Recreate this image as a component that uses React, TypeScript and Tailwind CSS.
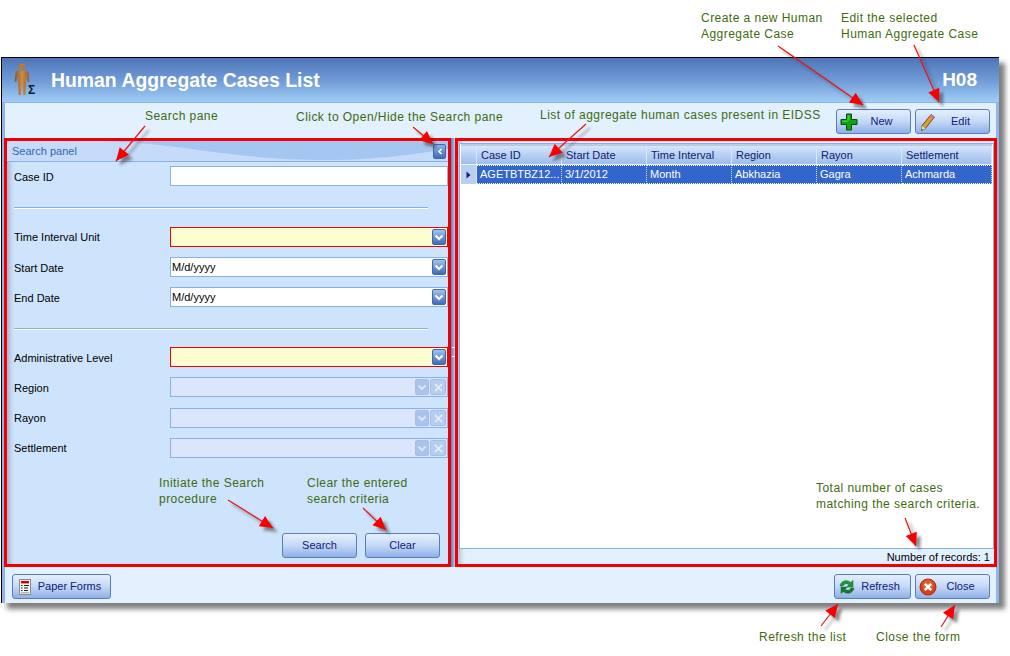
import type { ReactNode } from "react";

const notes = [
  { text: "Search pane", className: "left-[145px] top-[108px]" },
  { text: "Click to Open/Hide the Search pane", className: "left-[296px] top-[109px]" },
  { text: "List of aggregate human cases present in EIDSS", className: "left-[540px] top-[107px]" },
  { text: "Create a new Human\nAggregate Case", className: "left-[701px] top-[10px]" },
  { text: "Edit the selected\nHuman Aggregate Case", className: "left-[841px] top-[10px]" },
  { text: "Initiate the Search\nprocedure", className: "left-[159px] top-[475px]" },
  { text: "Clear the entered\nsearch criteria", className: "left-[307px] top-[475px]" },
  { text: "Total number of cases\nmatching the search criteria.", className: "left-[816px] top-[480px]" },
  { text: "Refresh the list", className: "left-[759px] top-[629px]" },
  { text: "Close the form", className: "left-[876px] top-[629px]" },
];

const arrows = [
  [145, 126, 116, 161],
  [413, 127, 433, 144],
  [586, 124, 549, 157],
  [778, 46, 863, 105],
  [914, 45, 939, 102],
  [228, 500, 273, 528],
  [363, 508, 386, 530],
  [905, 518, 916, 546],
  [821, 626, 838, 604],
  [941, 627, 955, 605],
];

const columns = ["Case ID", "Start Date", "Time Interval", "Region", "Rayon", "Settlement"];
const row = ["AGETBTBZ12...", "3/1/2012", "Month", "Abkhazia", "Gagra", "Achmarda"];

function arrowHead(x1: number, y1: number, x2: number, y2: number) {
  const len = Math.hypot(x2 - x1, y2 - y1);
  const ux = (x2 - x1) / len;
  const uy = (y2 - y1) / len;
  const bx = x2 - ux * 13;
  const by = y2 - uy * 13;
  return `${x2},${y2} ${bx - uy * 6},${by + ux * 6} ${bx + uy * 6},${by - ux * 6}`;
}

function ArrowLayer() {
  return (
    <svg className="absolute left-0 top-0 pointer-events-none" width="1010" height="656">
      <defs>
        <filter id="arrowBlur" x="-50%" y="-50%" width="200%" height="200%">
          <feGaussianBlur stdDeviation="1.6" />
        </filter>
      </defs>
      {arrows.map(([x1, y1, x2, y2], i) => (
        <g key={i}>
          <g transform="translate(4 4)" filter="url(#arrowBlur)" opacity="0.55">
            <line x1={x1} y1={y1} x2={x2} y2={y2} stroke="#333" strokeWidth="1.2" />
            <polygon points={arrowHead(x1, y1, x2, y2)} fill="#333" />
          </g>
          <line x1={x1} y1={y1} x2={x2} y2={y2} stroke="#f01010" strokeWidth="1.2" />
          <polygon points={arrowHead(x1, y1, x2, y2)} fill="#f80000" />
        </g>
      ))}
    </svg>
  );
}

function HumanIcon() {
  return (
    <div className="relative ml-[12px] mr-[13px] h-[34px] w-[24px] shrink-0">
      <svg width="18" height="33" viewBox="0 0 18 33" className="absolute left-0 top-0">
        <defs>
          <linearGradient id="body" x1="0" x2="1" y1="0" y2="0">
            <stop offset="0" stopColor="#7d5a36" />
            <stop offset="0.5" stopColor="#d08a3e" />
            <stop offset="1" stopColor="#8a6238" />
          </linearGradient>
        </defs>
        <circle cx="8" cy="3.5" r="3.2" fill="#b9773a" />
        <path
          d="M4 7.5h8c1.5 0 2.4 1 2.6 2.4l.9 8.6-1.8.4-1.2-6.5-.4 7.5-.7 12h-2.2l-.8-10.5h-.6l-.8 10.5H4.7l-.7-12-.4-7.5-1.2 6.5-1.8-.4.9-8.6C1.7 8.5 2.6 7.5 4 7.5z"
          fill="url(#body)"
        />
      </svg>
      <span className="absolute left-[14px] top-[20px] text-[12px] font-bold leading-[14px] text-[#10202c]">Σ</span>
    </div>
  );
}

function PlusIcon() {
  return (
    <svg width="18" height="18" viewBox="0 0 18 18">
      <path d="M6.5 1h5v5.5H17v5h-5.5V17h-5v-5.5H1v-5h5.5z" fill="#10a010" stroke="#064d06" strokeWidth="1" />
      <path d="M7.5 2.5h2v5h-2zM2.5 7.5h5v1.5h-5z" fill="#3fd03f" />
    </svg>
  );
}

function PencilIcon() {
  return (
    <svg width="18" height="18" viewBox="0 0 18 18">
      <path d="M12 1.5l3.5 2.6L6.2 15.6l-3.7 1.9.2-4.4z" fill="#e09a34" stroke="#4d4230" strokeWidth="0.9" />
      <path d="M12 1.5l3.5 2.6-1.5 1.9-3.5-2.7z" fill="#d87a70" />
      <path d="M2.7 13.1l3.5 2.5-3.7 1.9z" fill="#efe0c4" />
      <path d="M2.5 17.5l1.4-.7-1.3-1z" fill="#222" />
    </svg>
  );
}

function RefreshIcon() {
  return (
    <svg width="18" height="16" viewBox="0 0 18 16">
      <path d="M2 7c.6-3.4 3.4-5.6 6.8-5.2 1.6.1 2.8.8 3.8 1.8L15 1.5V8H8.8l2-2c-.6-.8-1.4-1.2-2.4-1.3C6.8 4.6 5.6 5.6 5 7z" fill="#1f9a3a" stroke="#0f6424" strokeWidth="0.5" />
      <path d="M16 9c-.6 3.4-3.4 5.6-6.8 5.2-1.6-.1-2.8-.8-3.8-1.8L3 14.5V8h6.2l-2 2c.6.8 1.4 1.2 2.4 1.3 1.6.1 2.8-.9 3.4-2.3z" fill="#127a2c" stroke="#0f6424" strokeWidth="0.5" />
    </svg>
  );
}

function CloseIcon() {
  return (
    <svg width="18" height="18" viewBox="0 0 18 18">
      <circle cx="9" cy="9" r="8" fill="#d8401c" stroke="#a32c10" />
      <circle cx="9" cy="7" r="5.5" fill="#ea6a3a" opacity="0.6" />
      <path d="M5.8 5.8l6.4 6.4M12.2 5.8l-6.4 6.4" stroke="#fff" strokeWidth="2.6" />
    </svg>
  );
}

function FormsIcon() {
  return (
    <svg width="12" height="16" viewBox="0 0 12 16">
      <rect x="0.5" y="0.5" width="11" height="15" fill="#f4f4f0" stroke="#8a8a8a" />
      <rect x="2" y="2" width="8" height="2.4" fill="#d00000" />
      <path d="M2 6.5h1.5M5 6.5h5M2 9h1.5M5 9h4M2 11.5h1.5M5 11.5h4" stroke="#222" strokeWidth="1" />
      <path d="M2 13.8h8" stroke="#999" strokeWidth="1" />
    </svg>
  );
}

function ToolButton({ label, width, icon }: { label: string; width: string; icon?: ReactNode }) {
  return (
    <button
      className={`${width} relative h-[25px] shrink-0 flex items-center justify-center rounded-[3px] border border-[#5a7cc0] bg-gradient-to-b from-[#e6f0fd] via-[#c4d8f6] to-[#8fb0e6] text-[11px] text-[#10207c]`}
    >
      {icon && <span className="absolute left-[3px] top-[3px] flex h-[18px] w-[18px] items-center justify-center">{icon}</span>}
      <span className={icon ? "pl-[16px]" : ""}>{label}</span>
    </button>
  );
}

function DropButton({ muted }: { muted?: boolean }) {
  return (
    <span
      className={`flex h-[16px] w-[14px] items-center justify-center rounded-[2px] border ${
        muted ? "border-[#a5bfe8] bg-[#a9c3ec]" : "border-[#3f67ad] bg-gradient-to-b from-[#a3c2ee] to-[#3f6cb8]"
      }`}
    >
      <svg width="10" height="7" viewBox="0 0 10 7">
        <path d="M1.5 1.5L5 5l3.5-3.5" fill="none" stroke={muted ? "#dbe6fb" : "#fff"} strokeWidth="2" />
      </svg>
    </span>
  );
}

function ClearButton() {
  return (
    <span className="flex h-[16px] w-[16px] items-center justify-center rounded-[2px] border border-[#a5bfe8] bg-[#b7cdf0]">
      <svg width="9" height="9" viewBox="0 0 9 9">
        <path d="M1 1l7 7M8 1L1 8" stroke="#eaf1fd" strokeWidth="1.6" />
      </svg>
    </span>
  );
}

function Field({
  label,
  className,
  kind,
  low,
}: {
  label: string;
  className: string;
  kind: "text" | "required" | "date" | "disabled";
  low?: boolean;
}) {
  const box =
    kind === "required"
      ? "border-[#f00000] bg-[#fdfdd0]"
      : kind === "disabled"
        ? "border-[#8ab0ea] bg-[#dbe6fd]"
        : "border-[#8ab0ea] bg-white";
  return (
    <div className={`flex h-[20px] items-center pl-[7px] ${className}`}>
      <span className={`w-[156px] shrink-0 text-[11px] text-black ${low ? "pt-[2px]" : ""}`}>{label}</span>
      <div className={`flex h-[20px] w-[278px] items-center justify-between border px-[1px] text-[11px] text-black ${box}`}>
        <span>{kind === "date" ? "M/d/yyyy" : ""}</span>
        {(kind === "required" || kind === "date") && <DropButton />}
        {kind === "disabled" && (
          <span className="flex gap-[1px]">
            <DropButton muted />
            <ClearButton />
          </span>
        )}
      </div>
    </div>
  );
}

function Divider({ className }: { className: string }) {
  return <div className={`ml-[7px] h-[2px] w-[414px] border-t border-[#8ab0e4] bg-white ${className}`} />;
}

function SearchPanel() {
  return (
    <section className="flex h-full w-[447px] shrink-0 flex-col border-[3px] border-[#f00000] bg-[#cde4fc] shadow-[inset_5px_0_4px_-2px_rgba(60,70,90,0.28)]">
      <div className="relative h-[21px] shrink-0 overflow-hidden border-b border-[#8ab0e4] bg-[#c6dafa]">
        <svg className="absolute left-0 top-0" width="441" height="20" viewBox="0 0 441 20">
          <path d="M90 0c90 2 130 19 230 19 50 0 90-6 121-11V0z" fill="#a6c6f2" />
        </svg>
        <span className="absolute left-[5px] top-[3px] text-[11px] leading-[14px] text-[#3366b0]">Search panel</span>
        <span className="absolute right-[2px] top-[3px] flex h-[15px] w-[13px] items-center justify-center rounded-[2px] border border-[#3f67ad] bg-gradient-to-b from-[#8fb2e8] to-[#3f6cb8]">
          <svg width="6" height="7" viewBox="0 0 6 7">
            <path d="M4.5 1L2 3.5 4.5 6" fill="none" stroke="#fff" strokeWidth="1.6" />
          </svg>
        </span>
      </div>
      <Field label="Case ID" kind="text" low className="mt-[4px]" />
      <Divider className="mt-[21px]" />
      <Field label="Time Interval Unit" kind="required" className="mt-[18px]" />
      <Field label="Start Date" kind="date" low className="mt-[10px]" />
      <Field label="End Date" kind="date" low className="mt-[10px]" />
      <Divider className="mt-[21px]" />
      <Field label="Administrative Level" kind="required" low className="mt-[17px]" />
      <Field label="Region" kind="disabled" low className="mt-[10px]" />
      <Field label="Rayon" kind="disabled" className="mt-[11px]" />
      <Field label="Settlement" kind="disabled" className="mt-[10px]" />
      <div className="mt-auto flex justify-end gap-[8px] pb-[6px] pr-[8px]">
        <ToolButton label="Search" width="w-[75px]" />
        <ToolButton label="Clear" width="w-[75px]" />
      </div>
    </section>
  );
}

function CasesGrid() {
  return (
    <section className="flex h-full min-w-0 flex-1 flex-col border-[3px] border-[#f00000] bg-[#e3f0fe] pl-[1px] pt-[2px] shadow-[inset_5px_0_4px_-2px_rgba(60,70,90,0.28)]">
      <div className="flex min-h-0 flex-1 flex-col border border-[#8ab0e4] bg-white px-[1px]">
        <div className="h-[2px] shrink-0 bg-[#bccbdc]" />
        <div className="grid h-[19px] shrink-0 grid-cols-[16px_85px_85px_85px_85px_85px_1fr] border-b border-[#f0f6ff] bg-gradient-to-b from-[#d6e6fb] via-[#b7d0f3] to-[#9dbdec] text-[11px] leading-[18px] text-[#12206f]">
          <div className="border-r border-[#d9e6f8]" />
          {columns.map((c) => (
            <div key={c} className="truncate border-r border-[#d9e6f8] pl-[4px]">
              {c}
            </div>
          ))}
        </div>
        <div className="grid h-[19px] shrink-0 grid-cols-[16px_85px_85px_85px_85px_85px_1fr] text-[11px] leading-[17px] text-white">
          <div className="flex items-center justify-center border-r border-[#d9e6f8] bg-[#b9d0f2]">
            <svg width="5" height="8" viewBox="0 0 5 8">
              <path d="M0.5 0.5l4 3.5-4 3.5z" fill="#12206f" />
            </svg>
          </div>
          {row.map((c) => (
            <div key={c} className="truncate border-y border-r border-dotted border-y-white border-r-[#d9e6f8] bg-[#3366cc] pl-[3px]">
              {c}
            </div>
          ))}
        </div>
        <div className="flex-1" />
      </div>
      <div className="h-[15px] shrink-0 pr-[4px] text-right text-[11px] leading-[16px] text-black">Number of records: 1</div>
    </section>
  );
}

export default function App() {
  return (
    <div className="relative h-[656px] w-[1010px] overflow-hidden bg-white [font-family:'Liberation_Sans',sans-serif]">
      <div className="h-[57px]" />
      <div className="ml-[1px] flex h-[546px] w-[998px] flex-col border-l border-t border-l-black border-t-black bg-[#e3f0fe] shadow-[6px_6px_5px_rgba(40,40,40,0.6)]">
        <header className="flex h-[45px] shrink-0 items-center border-b border-[#8ab4e8] bg-gradient-to-b from-[#4f76b8] via-[#6f9ad6] to-[#a0cdf6]">
          <HumanIcon />
          <h1 className="text-[19.4px] font-bold leading-[24px] text-white">Human Aggregate Cases List</h1>
          <span className="ml-auto pr-[22px] text-[19px] font-bold leading-[24px] text-white">H08</span>
        </header>
        <div className="flex min-h-0 flex-1 flex-col border-x-[3px] border-[#8fb6ea]">
          <div className="flex h-[35px] shrink-0 items-start justify-end gap-[4px] pr-[6px] pt-[6px]">
            <ToolButton label="New" width="w-[75px]" icon={<PlusIcon />} />
            <ToolButton label="Edit" width="w-[75px]" icon={<PencilIcon />} />
          </div>
          <div className="-mx-[1px] flex h-[429px] shrink-0">
            <SearchPanel />
            <div className="relative w-[4px] shrink-0 bg-gradient-to-r from-[#4f7fc8] to-[#b5cdf2]">
              <span className="absolute left-[1px] top-[209px] h-[10px] w-[2px] border-y border-dotted border-white" />
            </div>
            <CasesGrid />
          </div>
          <footer className="flex flex-1 items-start justify-between pl-[7px] pr-[6px] pt-[7px]">
            <ToolButton label="Paper Forms" width="w-[99px]" icon={<FormsIcon />} />
            <div className="flex gap-[4px]">
              <ToolButton label="Refresh" width="w-[77px]" icon={<RefreshIcon />} />
              <ToolButton label="Close" width="w-[75px]" icon={<CloseIcon />} />
            </div>
          </footer>
        </div>
      </div>
      <ArrowLayer />
      {notes.map((n) => (
        <p
          key={n.text}
          className={`absolute whitespace-pre text-[12px] leading-[16px] tracking-[0.46px] text-[#3f6b10] ${n.className}`}
        >
          {n.text}
        </p>
      ))}
    </div>
  );
}
